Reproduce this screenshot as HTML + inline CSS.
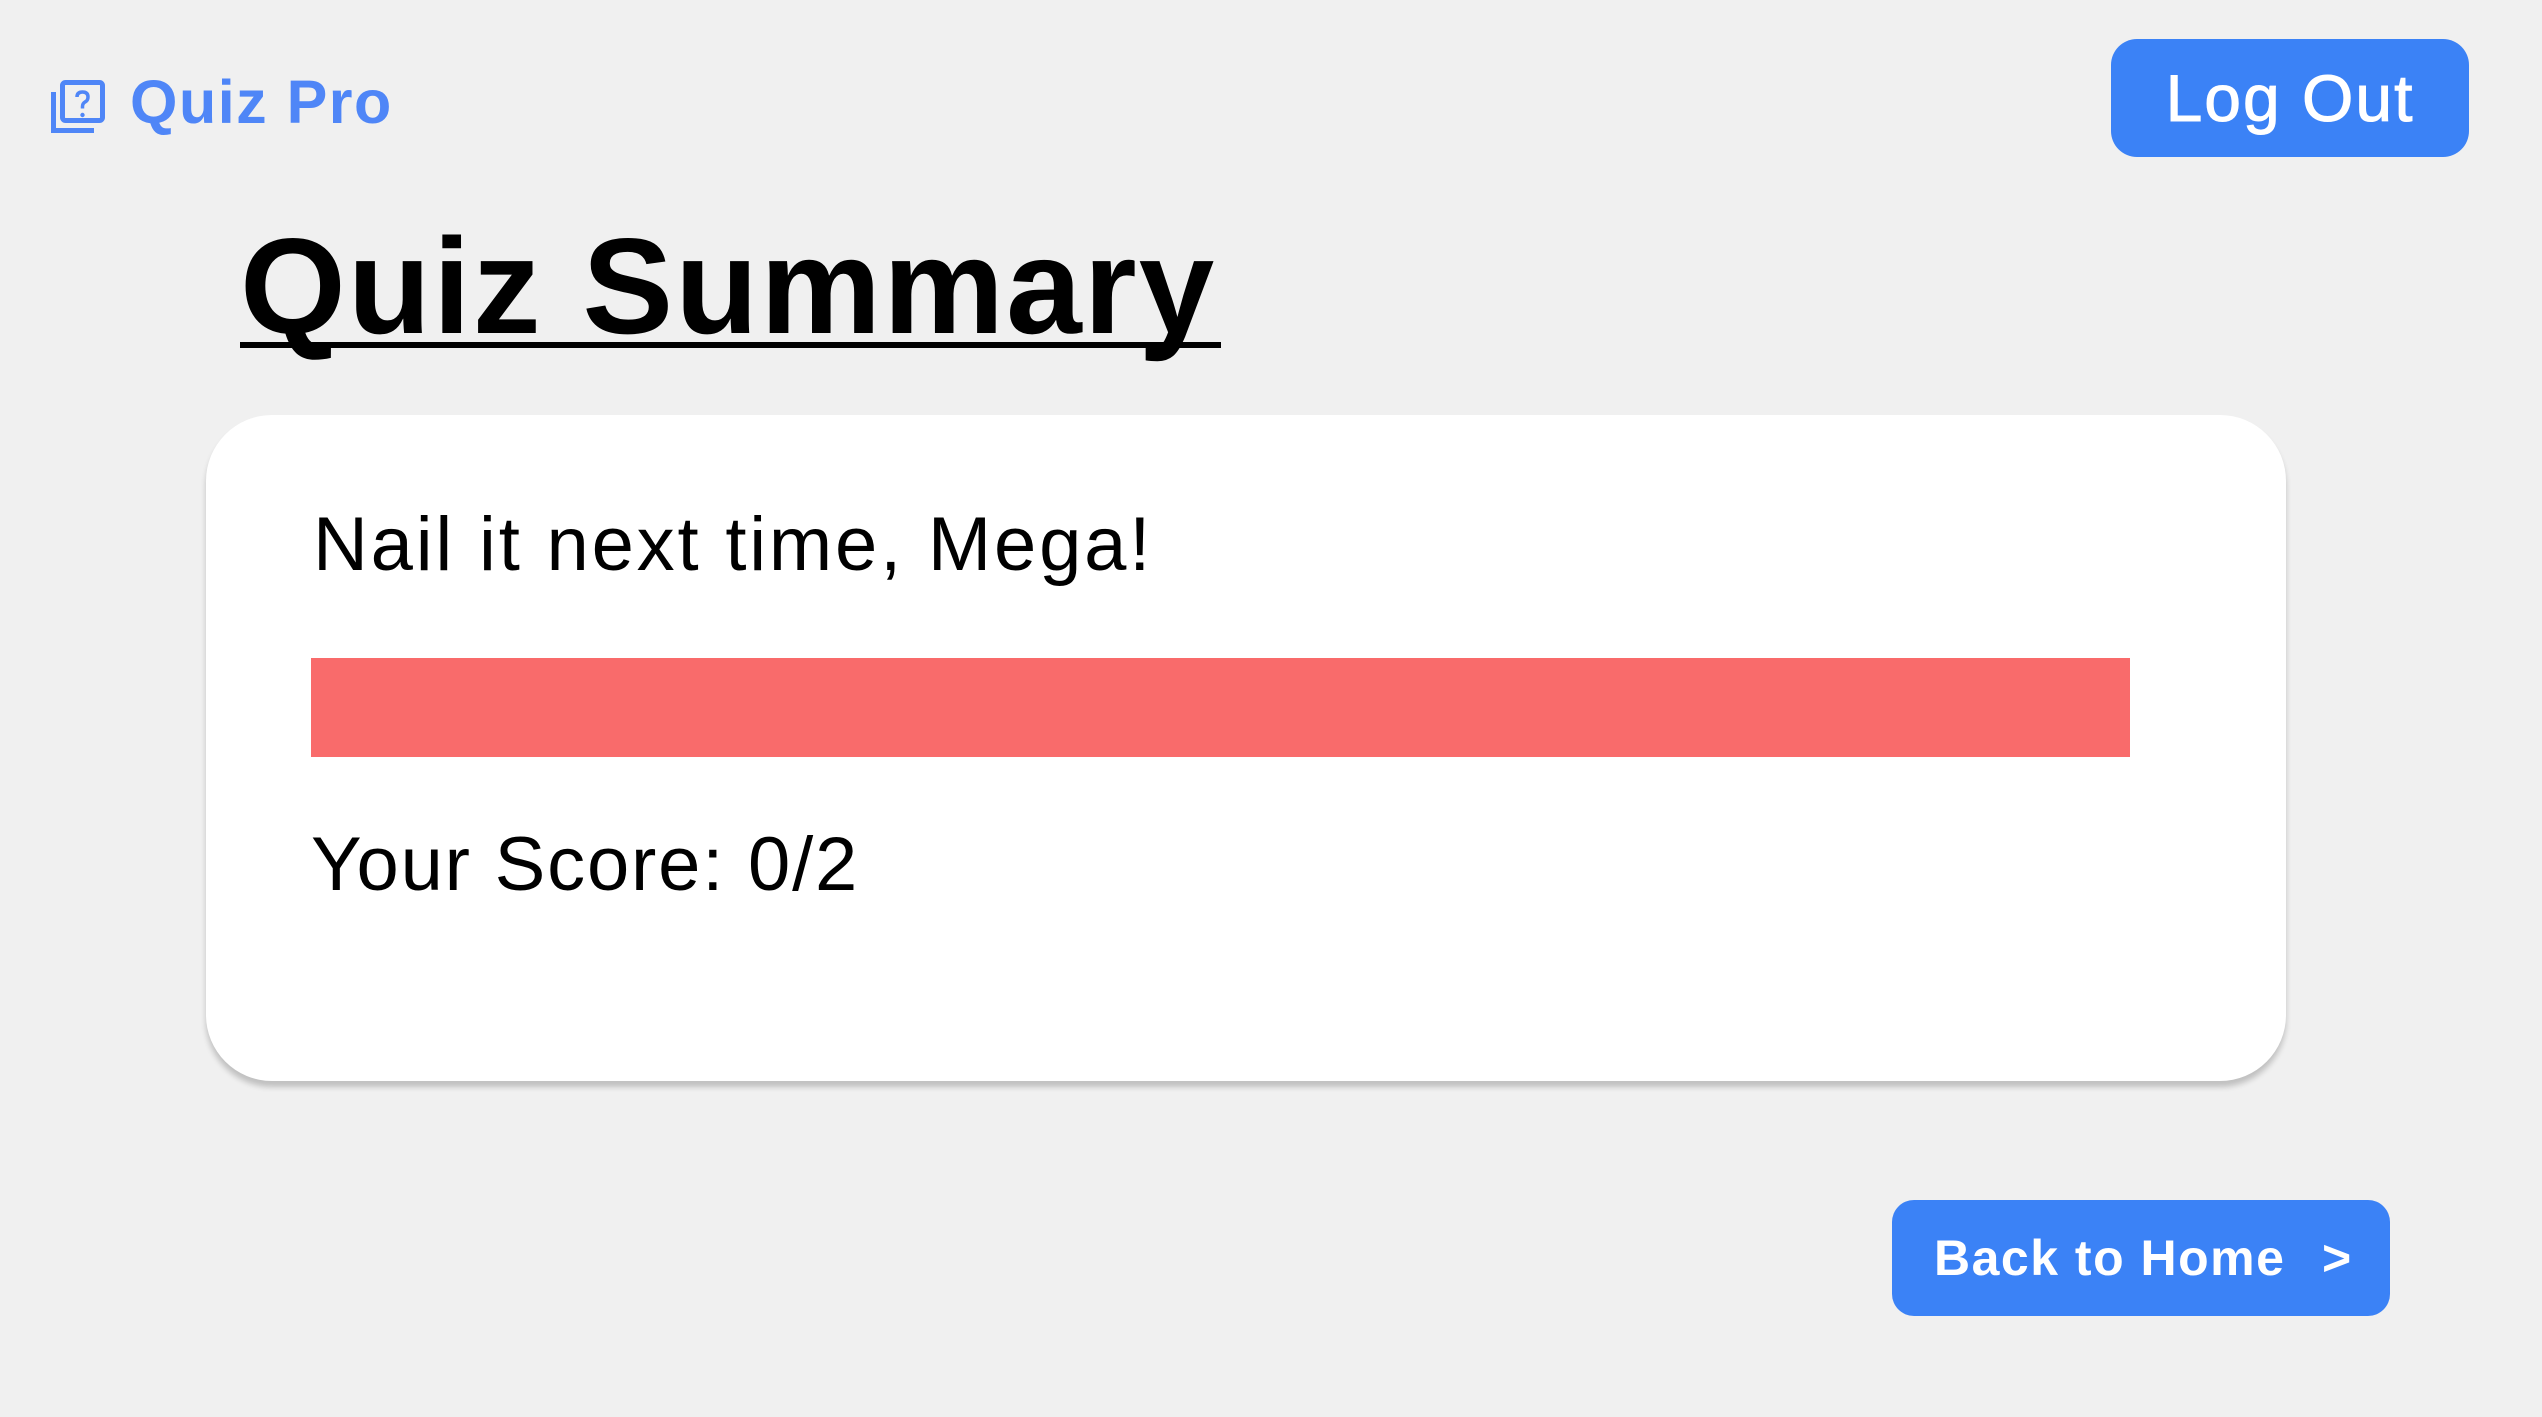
<!DOCTYPE html>
<html><head><meta charset="utf-8"><style>
html,body{margin:0;padding:0}
body{width:2542px;height:1417px;background:#f0f0f0;position:relative;overflow:hidden;font-family:"Liberation Sans",sans-serif}
.logo{position:absolute;left:49px;top:78px}
.brand{position:absolute;left:130px;top:67px;font-size:61px;font-weight:bold;color:#4f86f7;letter-spacing:1.5px}
.logout{position:absolute;left:2111px;top:39px;width:358px;height:118px;background:#3b82f6;border-radius:26px;color:#fff;font-size:66px;display:flex;align-items:center;justify-content:center;letter-spacing:2px;-webkit-text-stroke:1px #fff}
.title{position:absolute;left:240px;top:218px;font-size:136px;font-weight:bold;color:#000;letter-spacing:2px;line-height:1}
.uline{position:absolute;left:240px;top:342px;width:981px;height:6px;background:#000}
.card{position:absolute;left:206px;top:415px;width:2080px;height:666px;background:#fff;border-radius:66px;box-shadow:0 6px 6px rgba(0,0,0,0.2)}
.t1{position:absolute;left:313px;top:507px;font-size:76px;color:#000;letter-spacing:2.8px;line-height:1}
.t2{position:absolute;left:311px;top:827px;font-size:76px;color:#000;letter-spacing:1.8px;line-height:1}
.bar{position:absolute;left:311px;top:658px;width:1819px;height:99px;background:#f96b6b}
.home{position:absolute;left:1892px;top:1200px;width:498px;height:116px;background:#3b82f6;border-radius:22px;color:#fff;font-size:50px;font-weight:bold}
.home span{position:absolute;top:33px;line-height:1}
</style></head><body>
<svg class="logo" width="60" height="60" viewBox="0 0 60 60"><rect x="13.5" y="4.5" width="40" height="38" rx="3" fill="none" stroke="#4f86f7" stroke-width="5"/><path d="M4.5 14 V52.5 H45" fill="none" stroke="#4f86f7" stroke-width="5"/><path d="M28 19 q0-5 5.5-5 q5.5 0 5.5 5 q0 3.5-3 5 q-2.5 1.5-2.5 4.5 v2" fill="none" stroke="#4f86f7" stroke-width="3.5"/><circle cx="33.5" cy="37" r="2.2" fill="#4f86f7"/></svg>
<div class="brand">Quiz Pro</div>
<div class="logout">Log Out</div>
<div class="title">Quiz Summary</div>
<div class="uline"></div>
<div class="card"></div>
<div class="t1">Nail it next time, Mega!</div>
<div class="bar"></div>
<div class="t2">Your Score: 0/2</div>
<div class="home"><span style="left:42px;letter-spacing:1.5px">Back to Home</span><span style="left:430px">&gt;</span></div>
</body></html>
